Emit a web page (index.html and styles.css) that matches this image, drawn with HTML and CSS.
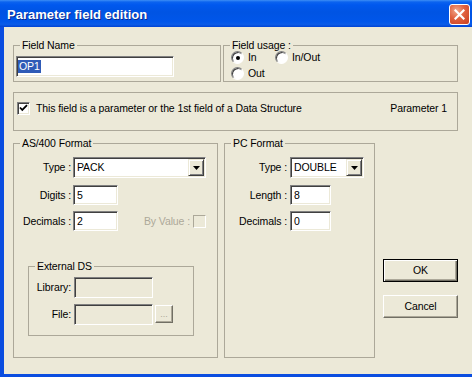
FILE: index.html
```html
<!doctype html>
<html>
<head>
	<meta charset="UTF-8">
	<title>Parameter field edition</title>
    <link rel="stylesheet" href="styles.css">
</head>
<body>
<div class="win">
    <div class="win-title">
        <span class="win-caption">Parameter field edition</span>
        <span class="win-close"><svg width="11" height="11" viewBox="0 0 11 11"><path d="M1.5 1.5L9.5 9.5M9.5 1.5L1.5 9.5" stroke="#fff" stroke-width="2.2" stroke-linecap="square"/></svg></span>
    </div>
    <div class="win-body">
        <div class="row-top">
            <fieldset class="grp grp-name">
                <legend>Field Name</legend>
                <div class="edit edit-name"><span class="sel">OP1</span></div>
            </fieldset>
            <fieldset class="grp grp-usage">
                <legend>Field usage :</legend>
                <div class="radios">
                    <label class="opt"><span class="radio on"></span>In</label>
                    <label class="opt"><span class="radio"></span>In/Out</label>
                    <label class="opt"><span class="radio"></span>Out</label>
                </div>
            </fieldset>
        </div>
        <div class="grp grp-param">
            <label class="opt opt-check"><span class="check"><svg width="11" height="11" viewBox="0 0 11 11"><path d="M2 4.5L4.3 7L9 2.2" fill="none" stroke="#000" stroke-width="1.8"/></svg></span>This field is a parameter or the 1st field of a Data Structure</label>
            <span class="param-no">Parameter 1</span>
        </div>
        <div class="row-main">
            <fieldset class="grp grp-as">
                <legend>AS/400 Format</legend>
                <div class="line">
                    <span class="lbl">Type :</span>
                    <div class="combo combo-as"><span class="combo-val">PACK</span><span class="combo-btn"><svg width="7" height="4" viewBox="0 0 7 4"><path d="M0 0H7L3.5 4Z"/></svg></span></div>
                </div>
                <div class="line line-2">
                    <span class="lbl">Digits :</span>
                    <div class="edit edit-num">5</div>
                </div>
                <div class="line line-3">
                    <span class="lbl">Decimals :</span>
                    <div class="edit edit-num">2</div>
                    <span class="byval">By Value :</span>
                    <span class="check check-off"></span>
                </div>
                <fieldset class="grp grp-ext">
                    <legend>External DS</legend>
                    <div class="line">
                        <span class="lbl">Library:</span>
                        <div class="edit edit-ds"></div>
                    </div>
                    <div class="line line-file">
                        <span class="lbl">File:</span>
                        <div class="edit edit-ds"></div>
                        <span class="browse">...</span>
                    </div>
                </fieldset>
            </fieldset>
            <fieldset class="grp grp-pc">
                <legend>PC Format</legend>
                <div class="line">
                    <span class="lbl">Type :</span>
                    <div class="combo combo-pc"><span class="combo-val">DOUBLE</span><span class="combo-btn"><svg width="7" height="4" viewBox="0 0 7 4"><path d="M0 0H7L3.5 4Z"/></svg></span></div>
                </div>
                <div class="line line-2">
                    <span class="lbl">Length :</span>
                    <div class="edit edit-len">8</div>
                </div>
                <div class="line line-3">
                    <span class="lbl">Decimals :</span>
                    <div class="edit edit-len">0</div>
                </div>
            </fieldset>
            <div class="btns">
                <a class="btn btn-default" href="javascript:void(0);">OK</a>
                <a class="btn" href="javascript:void(0);">Cancel</a>
            </div>
        </div>
    </div>
</div>
</body>
</html>
```

FILE: styles.css
```css
/* reset */
*{box-sizing:border-box;}
body{margin:0;background:#ece9d8;font:10.5px/13px "Liberation Sans", Arial, sans-serif;letter-spacing:-0.1px;color:#000;}
a{text-decoration:none;color:#000;}
fieldset{margin:0;min-width:0;}

/* window frame */
.win{width:472px;height:377px;display:flex;flex-direction:column;}
.win-title{flex:none;height:27px;display:flex;align-items:center;justify-content:space-between;padding:1px 2px 0 7px;
    background:linear-gradient(to bottom,#3d8ef5 0,#0b63ef 2px,#0058ee 5px,#0054e3 45%,#0056ea 80%,#0a5ce8 90%,#0043d4 100%);}
.win-caption{color:#fff;font:bold 13px/15px "Liberation Sans", Arial, sans-serif;letter-spacing:0;text-shadow:1px 1px #0a2a90;}
.win-close{width:21px;height:21px;border:1px solid #fff;border-radius:3px;display:flex;align-items:center;justify-content:center;
    background:radial-gradient(circle at 35% 30%,#f1a88c 0,#e0613f 45%,#c83e1f 100%);}
.win-body{flex:1;border-left:4px solid #0a4de0;border-bottom:3px solid #0a4de0;padding:12px 0 0 9px;}

/* group boxes */
.grp{border:1px solid #aca899;padding:0;}
.grp legend{padding:0 2px;margin-left:6px;line-height:13px;}
.row-top{display:flex;}
.grp-name{width:208px;height:43px;padding-top:4px;}
.grp-usage{width:235px;height:43px;margin-left:2px;}
.grp-param{width:445px;height:39px;margin-top:10px;display:flex;justify-content:space-between;align-items:flex-start;padding:9px 10px 0 3px;}
.row-main{display:flex;align-items:flex-start;margin-top:6px;}
.grp-as{width:205px;height:221px;padding:7px 11px 0 0;}
.grp-pc{width:151px;height:221px;margin-left:6px;padding-top:7px;}
.grp-ext{width:166px;height:76px;margin:29px 0 0 14px;padding-top:4px;}

/* options */
.radios{display:grid;grid-template-columns:44px auto;row-gap:3px;margin:-1px 0 0 7px;}
.opt{display:flex;align-items:center;height:13px;}
.radio{width:13px;height:13px;margin-right:4px;border-radius:50%;border:1px solid;border-color:#808080 #fff #fff #808080;
    background:#fff;box-shadow:inset 1px 1px #404040;display:flex;align-items:center;justify-content:center;}
.radio.on:after{content:"";width:4px;height:4px;border-radius:50%;background:#000;}
.check{width:13px;height:13px;border:1px solid;border-color:#808080 #fff #fff #808080;box-shadow:inset 1px 1px #404040,inset -1px -1px #ece9d8;
    background:#fff;display:flex;align-items:center;justify-content:center;flex:none;}
.opt-check .check{margin-right:6px;}
.check-off{background:#ece9d8;border-color:#aca899 #fff #fff #aca899;box-shadow:none;}

/* controls */
.line{display:flex;align-items:center;}
.line-2{margin-top:7px;}
.line-3{margin-top:6px;}
.line-file{margin-top:6px;align-items:flex-start;}
.lbl{flex:none;text-align:right;}
.grp-as .lbl{width:57px;margin-right:2px;}
.grp-pc .lbl{width:62px;margin-right:3px;}
.grp-ext .lbl{width:42px;margin-right:3px;}
.line-file .lbl{line-height:21px;}

.edit{height:20px;display:flex;align-items:center;padding-left:3px;background:#fff;border:1px solid;
    border-color:#808080 #fff #fff #808080;box-shadow:inset 1px 1px #404040,inset -1px -1px #ece9d8;}
.edit-name{width:158px;height:21px;margin-left:2px;padding-left:1px;}
.sel{background:#2f5bb7;color:#fff;padding:0 1px;line-height:13px;}
.edit-num{width:45px;}
.edit-len{width:41px;}
.edit-ds{width:79px;height:21px;background:#ece9d8;}

.combo{height:21px;display:flex;padding:1px;background:#fff;border:1px solid;
    border-color:#808080 #fff #fff #808080;box-shadow:inset 1px 1px #404040,inset -1px -1px #ece9d8;}
.combo-as{width:133px;}
.combo-pc{width:74px;}
.combo-val{flex:1;padding-left:2px;line-height:17px;}
.combo-btn{width:16px;flex:none;display:flex;align-items:center;justify-content:center;background:#ece9d8;border:1px solid;
    border-color:#ece9d8 #404040 #404040 #ece9d8;box-shadow:inset 1px 1px #fff,inset -1px -1px #808080;}

.byval{margin-left:auto;margin-right:3px;color:#aca899;}
.browse{width:18px;height:18px;margin:1px 0 0 2px;display:flex;align-items:center;justify-content:center;color:#aca899;background:#ece9d8;
    border:1px solid;border-color:#fff #716f64 #716f64 #fff;box-shadow:inset -1px -1px #aca899;font-size:9px;line-height:9px;letter-spacing:0;}

/* buttons */
.btns{width:75px;margin-left:8px;padding-top:122px;display:flex;flex-direction:column;gap:13px;}
.btn{height:23px;display:flex;align-items:center;justify-content:center;background:#ece9d8;border:1px solid;
    border-color:#fff #716f64 #716f64 #fff;box-shadow:inset -1px -1px #aca899;}
.btn-default{border-color:#000;box-shadow:inset 1px 1px #fff,inset -1px -1px #716f64,inset -2px -2px #aca899;}
```
